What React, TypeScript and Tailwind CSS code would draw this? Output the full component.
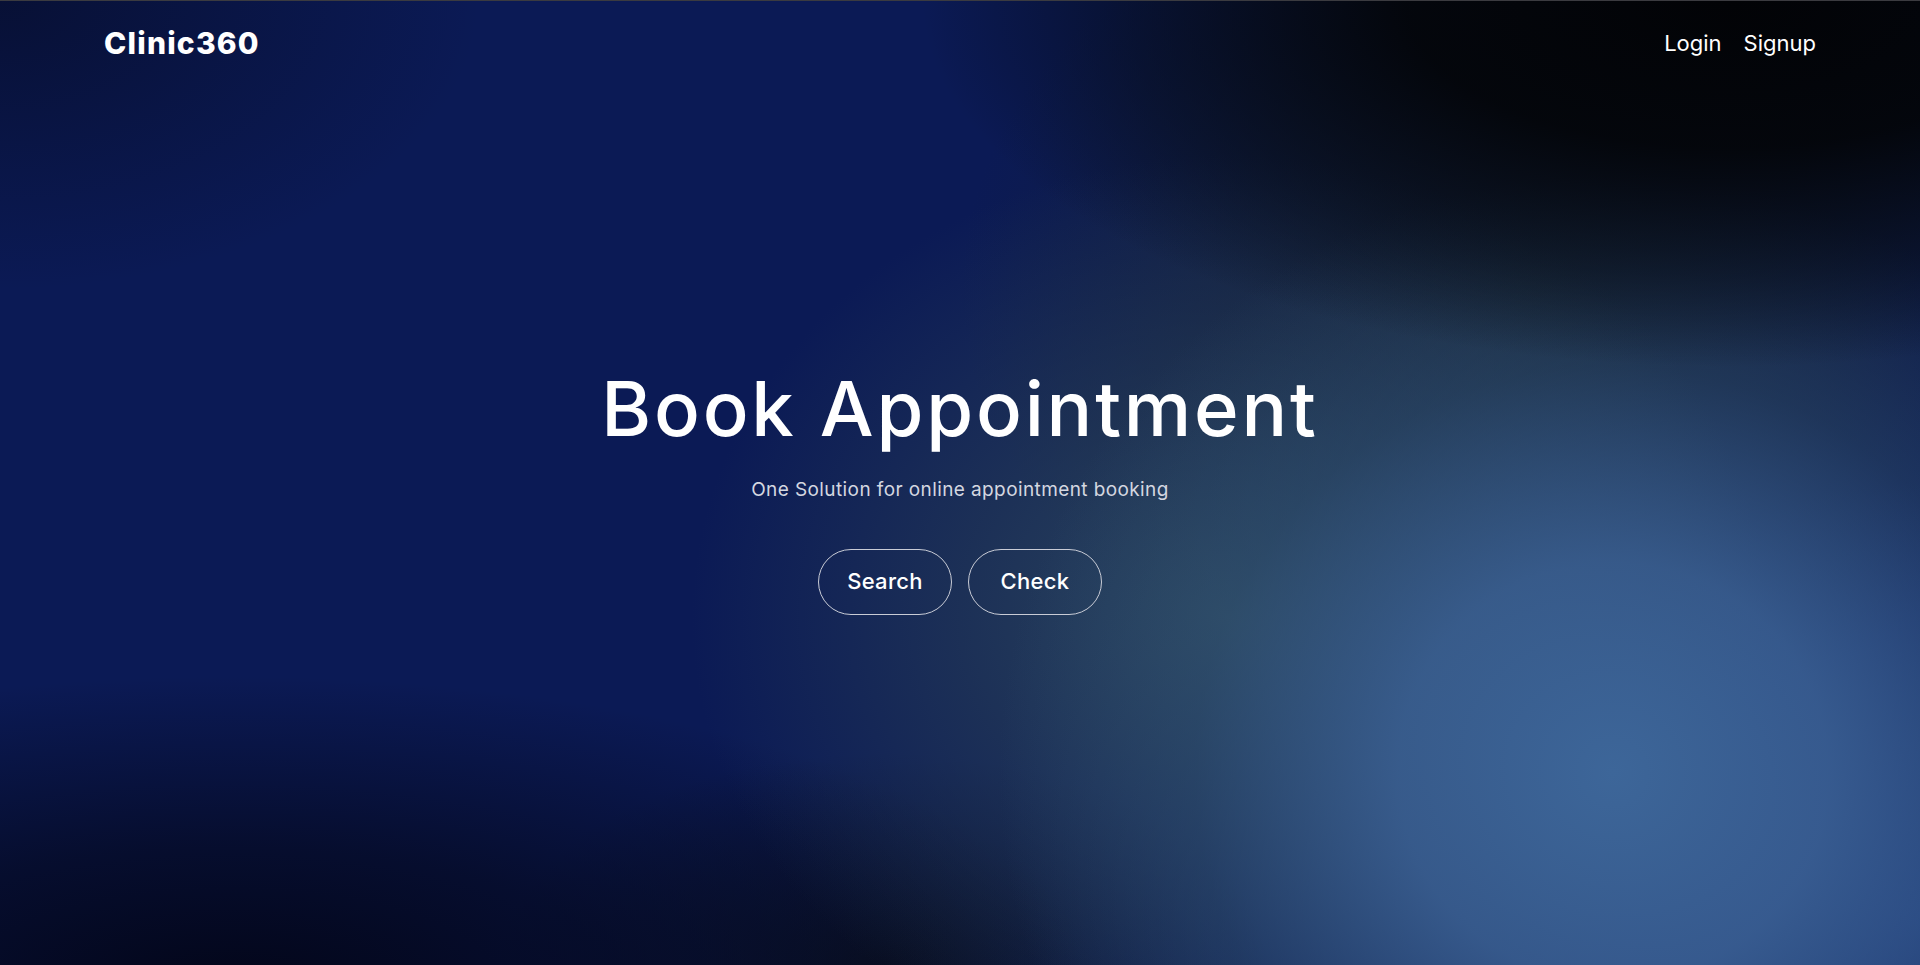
import React from "react";

export default function App() {
  return (
    <div className="relative h-[965px] w-full overflow-hidden border-t border-[#3b3b40] bg-[#0b1a55] font-['Inter','Open_Sans',sans-serif] text-white">
      <div className="absolute inset-0 bg-[radial-gradient(ellipse_42%_38%_at_90%_0%,#020306_0%,rgba(3,5,9,0.95)_40%,rgba(5,10,20,0.5)_75%,rgba(5,10,20,0)_100%),radial-gradient(ellipse_32%_62%_at_84%_80%,#3d6699_0%,rgba(60,98,148,0.85)_35%,rgba(48,82,118,0.45)_68%,rgba(40,70,100,0)_100%),radial-gradient(ellipse_28%_48%_at_64%_64%,rgba(46,74,95,0.95)_0%,rgba(42,66,88,0.55)_50%,rgba(30,50,70,0)_100%),radial-gradient(ellipse_30%_45%_at_80%_30%,rgba(22,34,48,0.95)_0%,rgba(22,34,48,0.5)_55%,rgba(22,34,48,0)_100%),radial-gradient(ellipse_22%_45%_at_100%_95%,rgba(34,64,140,0.85)_0%,rgba(34,64,140,0)_100%),radial-gradient(ellipse_45%_32%_at_12%_102%,#03061a_0%,rgba(4,8,30,0.7)_45%,rgba(4,8,30,0)_100%),radial-gradient(ellipse_20%_22%_at_46%_100%,rgba(10,16,30,0.9)_0%,rgba(10,16,30,0)_100%),radial-gradient(ellipse_25%_30%_at_0%_0%,rgba(6,12,40,0.7)_0%,rgba(6,12,40,0)_100%)]" />
      <div className="relative flex h-full flex-col">
        <nav className="flex h-[84px] items-center justify-between px-[104px]">
          <span className="text-[30px] font-extrabold tracking-[1.2px]">Clinic360</span>
          <div className="flex items-center gap-[22px] text-[22px]">
            <a className="cursor-pointer">Login</a>
            <a className="cursor-pointer">Signup</a>
          </div>
        </nav>
        <section className="flex flex-col items-center pt-[285px]">
          <h1 className="text-[76px] font-medium leading-none tracking-[2.8px]">Book Appointment</h1>
          <p className="mt-[30px] text-[19px] tracking-[0.4px] text-[#d4d7e0]">One Solution for online appointment booking</p>
          <div className="mt-[44px] flex gap-4">
            <button className="h-[66px] w-[134px] rounded-full border border-[#c9ccd6] text-[22px] font-medium tracking-[0.3px]">Search</button>
            <button className="h-[66px] w-[134px] rounded-full border border-[#c9ccd6] text-[22px] font-medium tracking-[0.3px]">Check</button>
          </div>
        </section>
      </div>
    </div>
  );
}
